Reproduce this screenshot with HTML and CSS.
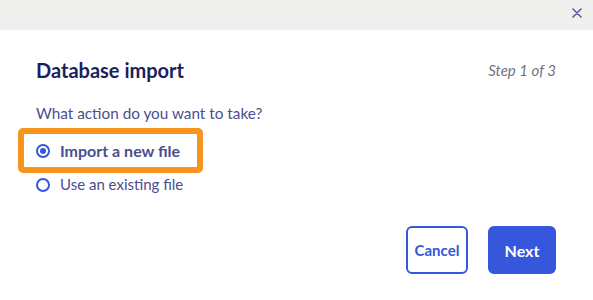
FILE: index.html
```html
<!DOCTYPE html>
<html lang="en">
<head>
    <meta charset="UTF-8">
    <title>Database import</title>
    <link rel="stylesheet" href="styles.css">
</head>
<body>
    <div class="modal">
        <div class="modal-top">
            <button class="close-btn" aria-label="Close">
                <svg width="10" height="10" viewBox="0 0 10 10">
                    <path d="M1 1 L9 9 M9 1 L1 9" stroke="#5a5a9e" stroke-width="1.6" stroke-linecap="round"/>
                </svg>
            </button>
        </div>

        <div class="modal-body">
            <div class="title-row">
                <h1>Database import</h1>
                <span class="step">Step 1 of 3</span>
            </div>

            <p class="question">What action do you want to take?</p>

            <div class="options">
                <label class="option selected">
                    <span class="radio checked"></span>
                    Import a new file
                </label>
                <label class="option">
                    <span class="radio"></span>
                    Use an existing file
                </label>
            </div>

            <div class="actions">
                <button class="btn btn-outline">Cancel</button>
                <button class="btn btn-primary">Next</button>
            </div>
        </div>
    </div>
</body>
</html>
```

FILE: styles.css
```css
:root {
    --blue: #3656dc;
    --navy: #1b1f5e;
    --slate: #4b4e8e;
    --orange: #f7941d;
}

* {
    margin: 0;
    padding: 0;
    box-sizing: border-box;
    font-family: 'Lato', sans-serif;
}

body {
    background: #ffffff;
    width: 593px;
    height: 300px;
    overflow: hidden;
}

.modal-top {
    height: 30px;
    background: #eff0ed;
    display: flex;
    justify-content: flex-end;
    align-items: center;
    padding-right: 11px;
}

.close-btn {
    background: none;
    border: none;
    display: flex;
    margin-top: -4px;
    cursor: pointer;
}

.modal-body {
    padding: 28px 37px 0 36px;
}

.title-row {
    display: flex;
    justify-content: space-between;
    align-items: center;
}

h1 {
    font-size: 20px;
    font-weight: 700;
    color: var(--navy);
}

.step {
    font-size: 15px;
    font-style: italic;
    color: #6f7380;
}

.question {
    margin-top: 22px;
    font-size: 15.3px;
    color: var(--slate);
}

.options {
    margin-left: -18px;
    margin-top: 6px;
    display: flex;
    flex-direction: column;
}

.option {
    display: flex;
    align-items: center;
    gap: 10px;
    font-size: 15px;
    color: var(--slate);
    padding-left: 12px;
    height: 20px;
    border: 6px solid transparent;
    border-width: 0 6px;
    width: 185px;
}

.option.selected {
    height: 45px;
    border-width: 6px;
    border-color: var(--orange);
    border-radius: 5px;
    font-weight: 700;
    font-size: 16px;
    margin-bottom: 0;
}

.radio {
    width: 14px;
    height: 14px;
    border: 2px solid var(--blue);
    border-radius: 50%;
    display: flex;
    align-items: center;
    justify-content: center;
    margin-top: 1px;
}

.option + .option {
    margin-top: 1px;
}

.radio.checked::after {
    content: '';
    width: 6px;
    height: 6px;
    border-radius: 50%;
    background: var(--blue);
}

.actions {
    display: flex;
    justify-content: flex-end;
    gap: 20px;
    margin-top: 32px;
}

.btn {
    height: 48px;
    border-radius: 6px;
    font-size: 15px;
    font-weight: 700;
    cursor: pointer;
    border: 2px solid var(--blue);
}

.btn-outline {
    width: 62px;
    background: #ffffff;
    color: var(--blue);
}

.btn-primary {
    width: 68px;
    background: var(--blue);
    color: #ffffff;
    font-size: 16px;
}
```
